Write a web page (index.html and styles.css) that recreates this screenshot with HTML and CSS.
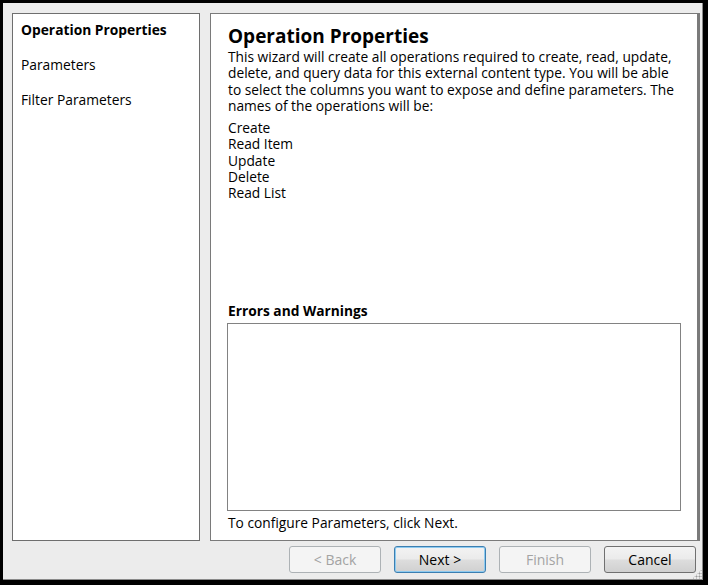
FILE: index.html
```html
<!DOCTYPE html>
<html>
<head>
<meta charset="utf-8">
<link rel="stylesheet" href="styles.css">
</head>
<body>
<div class="window">
  <div class="panes">
    <nav class="nav">
      <div class="nav-item active">Operation Properties</div>
      <div class="nav-item">Parameters</div>
      <div class="nav-item">Filter Parameters</div>
    </nav>
    <main class="content">
      <h1 class="title">Operation Properties</h1>
      <p class="desc">This wizard will create all operations required to create, read, update, delete, and query data for this external content type. You will be able to select the columns you want to expose and define parameters. The names of the operations will be:</p>
      <ul class="ops">
        <li>Create</li>
        <li>Read Item</li>
        <li>Update</li>
        <li>Delete</li>
        <li>Read List</li>
      </ul>
      <div class="errors-label">Errors and Warnings</div>
      <div class="errors-box"></div>
      <div class="hint">To configure Parameters, click Next.</div>
    </main>
  </div>
  <div class="buttons">
    <button class="btn disabled">&lt; Back</button>
    <button class="btn focused">Next &gt;</button>
    <button class="btn disabled">Finish</button>
    <button class="btn">Cancel</button>
  </div>
  <div class="grip"></div>
</div>
</body>
</html>
```
FILE: styles.css
```css
* { box-sizing: border-box; }
html, body { margin: 0; padding: 0; }
body {
  width: 708px;
  height: 585px;
  font-family: "Open Sans", "Noto Sans", sans-serif;
  font-size: 13.75px;
  color: #000;
  overflow: hidden;
}
.window {
  position: relative;
  width: 708px;
  height: 585px;
  background: #ececec;
  border-top: 3px solid #000;
  border-left: 3px solid #000;
  border-bottom: 5px solid #000;
  border-right: 5px solid #000;
  box-shadow: inset -1px -1px 0 #8a8a8a;
  padding: 10px 6px 0 9px;
  display: flex;
  flex-direction: column;
}
.panes {
  display: flex;
  gap: 10px;
  height: 528px;
}
.nav {
  width: 188px;
  flex: none;
  background: #fff;
  border: 1px solid #6e6e6e;
  padding: 5px 8px;
}
.nav-item {
  height: 35px;
  line-height: 22px;
  font-size: 13.8px;
}
.nav-item.active { font-weight: bold; }
.content {
  flex: 1;
  background: #fff;
  border: 1px solid #7a7a7a;
  border-right: 3px solid #7a7a7a;
  padding: 9px 16px 0 17px;
  display: flex;
  flex-direction: column;
}
.title {
  margin: 0;
  font-size: 19px;
  font-weight: bold;
  line-height: 26px;
}
.desc {
  margin: 0;
  line-height: 16.3px;
}
.ops {
  list-style: none;
  margin: 6px 0 0 0;
  padding: 0;
  line-height: 16.3px;
}
.errors-label {
  margin-top: 100px;
  font-weight: bold;
  line-height: 18px;
}
.errors-box {
  margin-top: 3px;
  margin-left: -1px;
  width: 454px;
  height: 188px;
  border: 1px solid #828282;
  background: #fff;
}
.hint {
  margin-top: 3px;
  line-height: 18px;
}
.buttons {
  display: flex;
  justify-content: flex-end;
  gap: 13px;
  margin-top: 5px;
  padding-right: 1px;
}
.btn {
  width: 92px;
  height: 27px;
  font-family: "Open Sans", "Noto Sans", sans-serif;
  font-size: 14px;
  color: #000;
  border: 1px solid #707070;
  border-radius: 3px;
  background: linear-gradient(#f3f3f3 0%, #ebebeb 48%, #dddddd 52%, #d0d0d0 100%);
  padding: 0;
}
.btn.focused {
  border-color: #3c7fb1;
  box-shadow: inset 0 0 0 1px #8ecbf0;
}
.btn.disabled {
  color: #a3a3a3;
  border-color: #adb2b5;
  background: #f4f4f4;
}
.grip {
  position: absolute;
  right: 1px;
  bottom: 1px;
  width: 10px;
  height: 10px;
  background:
    radial-gradient(circle, #9a9a9a 0.8px, transparent 1.2px) 0 0 / 3px 3px;
  clip-path: polygon(100% 0, 100% 100%, 0 100%);
}
```
